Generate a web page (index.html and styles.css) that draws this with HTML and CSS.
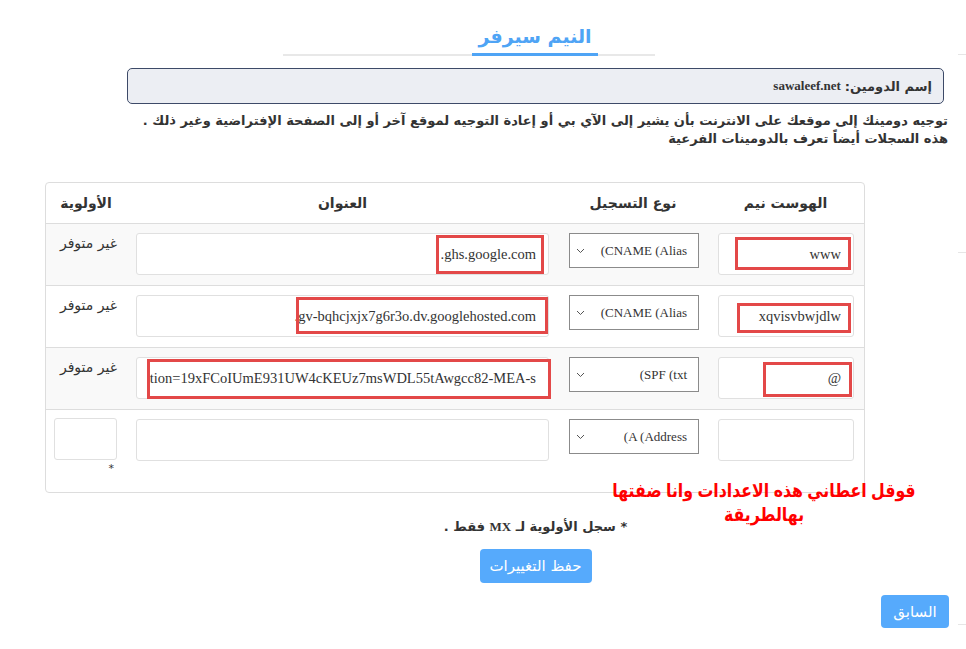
FILE: index.html
```html
<!DOCTYPE html>
<html lang="ar" dir="rtl">
<head>
  <meta charset="UTF-8">
  <meta name="viewport" content="width=device-width, initial-scale=1.0">
  <title>النيم سيرفر</title>
  <link rel="stylesheet" href="styles.css">
</head>
<body>
  <div class="page">
    <aside class="edge">
      <div class="edge-line first"></div>
      <div class="edge-line second"></div>
      <div class="edge-line third"></div>
    </aside>

    <main class="main">
      <div class="tabs">
        <div class="tab">النيم سيرفر</div>
      </div>

      <div class="domain-box">إسم الدومين: <span class="latin">sawaleef.net</span></div>

      <p class="intro">
        توجيه دومينك إلى موقعك على الانترنت بأن يشير إلى الآي بي أو إعادة التوجيه لموقع آخر أو إلى الصفحة الإفتراضية وغير ذلك .<br>
        هذه السجلات أيضاً تعرف بالدومينات الفرعية
      </p>

      <div class="records">
        <div class="row head">
          <div class="cell">الهوست نيم</div>
          <div class="cell">نوع التسجيل</div>
          <div class="cell">العنوان</div>
          <div class="cell">الأولوية</div>
        </div>

        <div class="row striped">
          <div class="cell host">
            <div class="field">
              <input class="input" type="text" value="www">
              <span class="mark mark-host-1"></span>
            </div>
          </div>
          <div class="cell type">
            <div class="select" role="combobox">
              <span class="select-value">CNAME (Alias<span dir="rtl">)</span></span>
              <svg class="chevron" width="9" height="6" viewBox="0 0 9 6"><polyline points="1,1 4.5,4.5 8,1" fill="none" stroke="#555" stroke-width="1"/></svg>
            </div>
          </div>
          <div class="cell addr">
            <div class="field">
              <input class="input" type="text" value="ghs.google.com.">
              <span class="mark mark-addr-1"></span>
            </div>
          </div>
          <div class="cell prio">غير متوفر</div>
        </div>

        <div class="row">
          <div class="cell host">
            <div class="field">
              <input class="input" type="text" value="xqvisvbwjdlw">
              <span class="mark mark-host-2"></span>
            </div>
          </div>
          <div class="cell type">
            <div class="select" role="combobox">
              <span class="select-value">CNAME (Alias<span dir="rtl">)</span></span>
              <svg class="chevron" width="9" height="6" viewBox="0 0 9 6"><polyline points="1,1 4.5,4.5 8,1" fill="none" stroke="#555" stroke-width="1"/></svg>
            </div>
          </div>
          <div class="cell addr">
            <div class="field">
              <input class="input" type="text" value="gv-bqhcjxjx7g6r3o.dv.googlehosted.com.">
              <span class="mark mark-addr-2"></span>
            </div>
          </div>
          <div class="cell prio">غير متوفر</div>
        </div>

        <div class="row striped">
          <div class="cell host">
            <div class="field">
              <input class="input" type="text" value="@">
              <span class="mark mark-host-3"></span>
            </div>
          </div>
          <div class="cell type">
            <div class="select" role="combobox">
              <span class="select-value">SPF (txt<span dir="rtl">)</span></span>
              <svg class="chevron" width="9" height="6" viewBox="0 0 9 6"><polyline points="1,1 4.5,4.5 8,1" fill="none" stroke="#555" stroke-width="1"/></svg>
            </div>
          </div>
          <div class="cell addr">
            <div class="field">
              <input class="input" type="text" value="google-site-verification=19xFCoIUmE931UW4cKEUz7msWDL55tAwgcc82-MEA-s">
              <span class="mark mark-addr-3"></span>
            </div>
          </div>
          <div class="cell prio">غير متوفر</div>
        </div>

        <div class="row last">
          <div class="cell host">
            <input class="input" type="text" value="">
          </div>
          <div class="cell type">
            <div class="select" role="combobox">
              <span class="select-value">A (Address<span dir="rtl">)</span></span>
              <svg class="chevron" width="9" height="6" viewBox="0 0 9 6"><polyline points="1,1 4.5,4.5 8,1" fill="none" stroke="#555" stroke-width="1"/></svg>
            </div>
          </div>
          <div class="cell addr">
            <input class="input" type="text" value="">
          </div>
          <div class="cell prio">
            <input class="input input-prio" type="text" value="">
            <div class="star">*</div>
          </div>
        </div>
      </div>

      <div class="scribble">قوقل اعطاني هذه الاعدادات وانا ضفتها<br>بهالطريقة</div>

      <p class="mx-note">* سجل الأولوية لـ <span class="latin">MX</span> فقط .</p>

      <div class="save-row">
        <button class="btn" type="button">حفظ التغييرات</button>
      </div>

      <div class="back-row">
        <button class="btn btn-back" type="button">السابق</button>
      </div>
    </main>
  </div>
</body>
</html>
```

FILE: styles.css
```css
body {
  margin: 0;
  background: #fff;
  color: #333;
  font-family: "DejaVu Sans", sans-serif;
}

.latin {
  font-family: "Liberation Serif", serif;
}

.page {
  display: flex;
  width: 966px;
  height: 649px;
  overflow: hidden;
}

.main {
  position: relative;
  width: 958px;
}

/* thin separators peeking in from the right column */
.edge {
  width: 8px;
  flex-shrink: 0;
}

.edge-line {
  height: 1px;
  background: #e6e6e6;
}

.edge-line.first { margin-top: 54px; }
.edge-line.second { margin-top: 197px; }
.edge-line.third { margin-top: 371px; }

/* title tab */
.tabs {
  margin: 0 303px 0 283px;
  padding-top: 19px;
  border-bottom: 2px solid #e8e8e8;
}

.tab {
  display: inline-block;
  width: 126px;
  margin-right: 57px;
  margin-bottom: -2px;
  text-align: center;
  font-size: 19px;
  font-weight: bold;
  line-height: 34px;
  color: #4fa4f5;
  border-bottom: 3px solid #4fa4f5;
}

.domain-box {
  display: flex;
  align-items: center;
  height: 34px;
  margin: 12px 14px 0 127px;
  padding: 0 11px;
  border: 1px solid #3d4a68;
  border-radius: 5px;
  background: #eceef3;
  font-size: 13px;
  font-weight: bold;
  gap: 4px;
}

.intro {
  margin: 8px 10px 0 0;
  font-size: 13px;
  font-weight: bold;
  line-height: 18px;
}

/* records table */
.records {
  width: 818px;
  margin: 34px 93px 0 45px;
  border: 1px solid #ddd;
  border-radius: 4px;
}

.row {
  display: grid;
  grid-template-columns: 157px 148px 433px 80px;
  border-top: 1px solid #ddd;
  height: 61px;
}

.row.head {
  border-top: none;
  height: 40px;
  align-items: center;
  font-size: 14px;
  font-weight: bold;
}

.row.head .cell {
  padding: 0;
  text-align: center;
}

.row.striped {
  background: #f9f9f9;
}

.row.last {
  height: 82px;
}

.cell {
  padding: 9px 10px 0 10px;
  box-sizing: border-box;
}

.cell.host {
  padding-left: 11px;
}

.cell.type {
  padding-right: 8px;
}

.cell.prio {
  padding: 8px 9px 0 0;
  font-size: 14px;
  line-height: 22px;
  color: #333;
}

.field {
  position: relative;
}

.input {
  display: block;
  width: 100%;
  height: 42px;
  box-sizing: border-box;
  padding: 0 12px;
  border: 1px solid #e0e0e0;
  border-radius: 3px;
  background: #fff;
  font-family: "Liberation Serif", serif;
  font-size: 14.5px;
  color: #333;
  direction: rtl;
  text-align: right;
}

.input-prio {
  width: 63px;
}

.star {
  width: 63px;
  padding-right: 3px;
  box-sizing: border-box;
  margin-top: 2px;
  font-size: 11px;
  line-height: 14px;
  text-align: right;
}

/* record type dropdown */
.select {
  display: flex;
  align-items: center;
  justify-content: space-between;
  width: 130px;
  height: 35px;
  box-sizing: border-box;
  padding: 0 11px 0 6px;
  border: 1px solid #8b8b8b;
  background: #fff;
  font-family: "Liberation Serif", serif;
  font-size: 13px;
  color: #333;
  cursor: pointer;
}

.select-value {
  display: block;
  padding-top: 1px;
}

.chevron {
  display: block;
  margin-top: 1px;
}

/* red boxes drawn over the filled-in values */
.mark {
  position: absolute;
  border: 3px solid #e34848;
  pointer-events: none;
}

.mark-host-1 { left: 17px; right: 3px; top: 4px; bottom: 5px; }
.mark-addr-1 { right: 5px; width: 108px; top: 2px; bottom: 1px; box-sizing: border-box; }
.mark-host-2 { left: 19px; right: 3px; top: 8px; bottom: 4px; }
.mark-addr-2 { left: 160px; right: 1px; top: 2px; bottom: 3px; }
.mark-host-3 { left: 45px; right: 2px; top: 5px; bottom: 2px; }
.mark-addr-3 { left: 11px; right: -2px; top: 2px; bottom: 0; }

.scribble {
  position: absolute;
  left: 560px;
  top: 479px;
  width: 408px;
  text-align: center;
  font-family: "Liberation Sans", "DejaVu Sans", sans-serif;
  font-size: 19px;
  font-weight: bold;
  line-height: 24px;
  color: #f00;
  transform: scaleX(0.83);
}

.mx-note {
  margin: 25px 14px 0 127px;
  text-align: center;
  font-size: 13px;
  font-weight: bold;
  line-height: 18px;
}

.save-row {
  margin: 13px 14px 0 127px;
  text-align: center;
}

.btn {
  height: 34px;
  padding: 0;
  border: none;
  border-radius: 4px;
  background: #56aafc;
  color: #fff;
  font-family: "DejaVu Sans", sans-serif;
  font-size: 15px;
  white-space: nowrap;
  cursor: pointer;
}

.save-row .btn {
  width: 112px;
}

.back-row {
  margin-top: 12px;
  padding-right: 9px;
}

.btn-back {
  width: 68px;
  height: 33px;
}
```
